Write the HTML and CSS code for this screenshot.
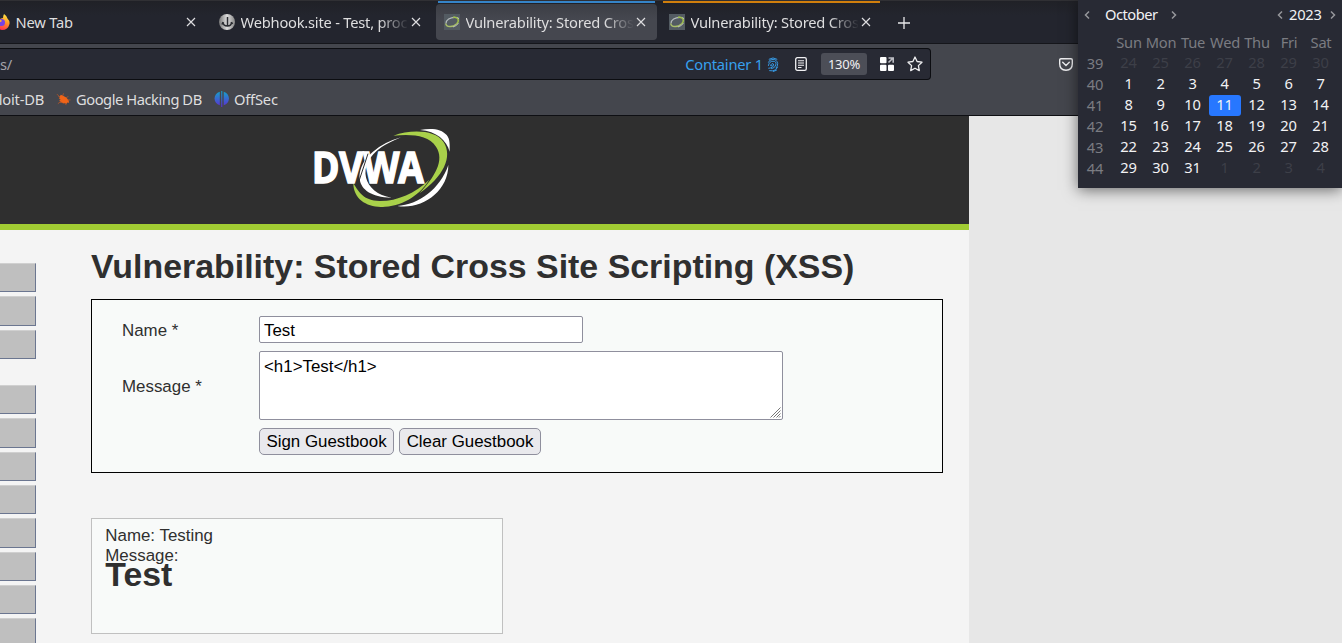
FILE: index.html
```
<!DOCTYPE html>
<html lang="en">
<head>
<meta charset="utf-8">
<title>Vulnerability: Stored Cross Site Scripting (XSS)</title>
<link rel="stylesheet" href="styles.css">
</head>
<body>
<svg class="defs" width="0" height="0">
  <symbol id="close" viewBox="0 0 10 10"><path d="M1 1l8 8M9 1l-8 8" fill="none" stroke="#dedee0" stroke-width="1.15"/></symbol>
  <symbol id="dvwa" viewBox="0 0 16 16"><rect width="16" height="16" fill="#535b62"/><path d="M2 9.500C2 6 6 3.300 11 3.300" fill="none" stroke="#b4babc" stroke-width="1.200"/><path d="M9 3.300C15 2.500 15.500 7 12.500 10" fill="none" stroke="#9fc04c" stroke-width="1.500"/><path d="M1.800 9.500C2 13.500 9 13.500 12.500 10" fill="none" stroke="#a9bf6a" stroke-width="1.500"/><path d="M13.500 3l1.300 2M9 13q4-1 5.500-4" fill="none" stroke="#c5cac9" stroke-width=".8"/></symbol>
  <symbol id="left" viewBox="0 0 6 10"><path d="M5 1.500L1.500 5 5 8.500" fill="none" stroke="#96979c" stroke-width="1.5"/></symbol>
  <symbol id="right" viewBox="0 0 6 10"><path d="M1 1.500L4.500 5 1 8.500" fill="none" stroke="#96979c" stroke-width="1.5"/></symbol>
</svg>

<header class="browser">
  <div class="tabs">
    <div class="tab first">
      <svg class="fav" viewBox="0 0 16 16"><defs><linearGradient id="fx" x1=".8" y1="0" x2=".4" y2="1"><stop offset="0" stop-color="#fff04a"/><stop offset=".45" stop-color="#ff9a25"/><stop offset="1" stop-color="#ff2850"/></linearGradient></defs><path d="M10 0q3 2 3.500 4.500Q16 7 15.500 10 14 16 8 16 0 15 0 8 1 4 4 2l2 3q2-1 3-1 0-2 1-4" fill="url(#fx)"/><circle cx="7.500" cy="8.500" r="3.500" fill="#7542e5"/><path d="M3 5q3 0 5 2-2 2-5 1" fill="#ffae2b"/></svg>
      <span class="title">New Tab</span><svg class="close"><use href="#close"/></svg>
    </div>
    <div class="tab">
      <svg class="fav" viewBox="0 0 16 16"><defs><linearGradient id="wh" x2="1"><stop stop-color="#777"/><stop offset=".5" stop-color="#ddd"/><stop offset="1" stop-color="#888"/></linearGradient></defs><circle cx="8" cy="8" r="8" fill="url(#wh)"/><path d="M8.500 3v8.500M4 8q0 4 4.500 4 4 0 4-4M4 8l-1 2.500M12.500 8l1 2" fill="none" stroke="#292b30" stroke-width="1.500"/></svg>
      <span class="title fade">Webhook.site - Test, process and</span><svg class="close"><use href="#close"/></svg>
    </div>
    <div class="tab active">
      <svg class="fav"><use href="#dvwa"/></svg>
      <span class="title fade">Vulnerability: Stored Cross Site</span><svg class="close"><use href="#close"/></svg>
    </div>
    <div class="tab orange">
      <svg class="fav"><use href="#dvwa"/></svg>
      <span class="title fade">Vulnerability: Stored Cross Site</span><svg class="close"><use href="#close"/></svg>
    </div>
    <svg class="plus" viewBox="0 0 12 12"><path d="M6 0v12M0 6h12" stroke="#e8e8ea" stroke-width="1.300"/></svg>
  </div>
  <div class="toolbar">
    <div class="url">
      <span class="path">s/</span>
      <span class="container">Container 1</span>
      <svg class="finger" viewBox="0 0 12 16"><g fill="none" stroke="#37a0ee" stroke-width="1"><path d="M1.500 2.500Q6-.5 10.500 2.500M1 6q1-3.500 5-3.500T11 7q0 3-2 5M1 9.500Q2 4.500 6 4.500t3 4Q8 12 4 12.500M1 12q2 0 4-1 2.500-2 1.500-3.500Q5 6 3.500 8.500q-.5 2 2 .5M2 14.500q4 1 7-1l2-3M6 15.500l4-1.500"/></g></svg>
      <svg class="reader" viewBox="0 0 12 14"><rect x=".7" y=".7" width="10.600" height="12.600" rx="1.600" fill="none" stroke="#f0f0f2" stroke-width="1.300"/><path d="M3 3.700h6M3 6h6M3 8.200h6M3 10.500h3.500" stroke="#f0f0f2" stroke-width="1.100"/></svg>
      <span class="zoom">130%</span>
      <svg class="grid" viewBox="0 0 14 14"><path d="M1 0h4.500q1 0 1 1v4.500q0 .7-1 .7H1q-1 0-1-1V1q0-1 1-1M1 7.700h4.500q1 0 1 1V13q0 1-1 1H1q-1 0-1-1V8.700q0-1 1-1M9 7.700h4q1 0 1 1V13q0 1-1 1H9q-1 0-1-1V8.700q0-1 1-1" fill="#fff"/><path d="M8.500 1h4.700v4.700M13 1L8.500 5.500" fill="none" stroke="#bcbdc3" stroke-width="1.600"/></svg>
      <svg class="star" viewBox="0 0 16 16"><path d="M8 1l2.100 4.500 4.900.7-3.600 3.400.9 5L8 12.200l-4.300 2.400.9-5L1 6.200l4.900-.7z" fill="none" stroke="#eeeef0" stroke-width="1.300" stroke-linejoin="round"/></svg>
    </div>
    <svg class="pocket" viewBox="0 0 14 13"><path d="M2 .7h10q1.300 0 1.300 1.300v3.700q0 6.300-6.300 6.500Q.7 12 .7 5.700V2Q.7.700 2 .7M3.700 4.300L7 7.500l3.300-3.200" fill="none" stroke="#eeeef0" stroke-width="1.400" stroke-linecap="round"/></svg>
  </div>
  <div class="bookmarks">
    <span class="b-exp">loit-DB</span>
    <svg class="bug" viewBox="0 0 16 14"><path d="M2 4l2 .5L5 2.500l2.500 1 3.500 2 2.500 3 .5 2.500-2-.3-.5 1.300-2.500-.7-1.500.5-1-1-2 .3.500-1.600-2-.5 2-1.200L3 6.500l1.500-.7z" fill="#f06418"/><path d="M1 1.800l3 3M8 1l-1 3M13 4l-2 2M15.500 8H12M2 12l4-3M11 13.500L9 11" stroke="#cf5a20" stroke-width=".7"/></svg>
    <span class="b-ghd">Google Hacking DB</span>
    <svg class="off" viewBox="0 0 16 16"><defs><linearGradient id="of" gradientUnits="userSpaceOnUse" x1="0" y1="0" x2="0" y2="16"><stop stop-color="#14a4cb"/><stop offset="1" stop-color="#5d2bd2"/></linearGradient></defs><path d="M5.800 .8v13.400Q.8 12.500.5 7.500.8 2.500 5.800.8M9.700.8v13.400q5-1.700 5.300-6.700Q14.700 2.500 9.700.8M7.200 0h1.100v16H7.200z" fill="url(#of)"/></svg>
    <span class="b-off">OffSec</span>
  </div>
</header>

<main class="site">
  <div class="banner">
    <svg class="logo" viewBox="0 3 510 324">
      <path d="M303 67Q250 82 218 111C165 155 150 245 275 248 190 235 165 150 245 96Q268 82 303 67" fill="#fff"/>
      <path d="M280 62C335 42 405 45 430 80 460 125 430 185 358 235 405 185 435 135 408 95 385 60 335 57 280 62" fill="#a9d14a"/>
      <path d="M360 45C395 38 425 42 440 60 451 73 449 92 449 110 440 76 410 49 360 45" fill="#fff"/>
      <path d="M445 150C445 230 365 285 292 273 355 269 421 222 445 150" fill="#fff"/>
      <path d="M160 205C160 255 205 280 255 275 315 271 362 236 388 194 345 235 290 259 238 258 192 257 178 234 160 205" fill="#a9d14a"/>
      <text class="logo-text" x="36" y="203" textLength="336" lengthAdjust="spacingAndGlyphs">DVWA</text>
      <path d="M204 116L174 207" stroke="#2f2f2f" stroke-width="3"/>
    </svg>
  </div>
  <div class="content">
    <nav class="menu">
      <ul><li></li><li></li><li></li></ul>
      <ul><li></li><li></li><li></li><li></li><li></li><li></li><li></li><li></li></ul>
    </nav>
    <section class="body">
      <h1 class="heading">Vulnerability: Stored Cross Site Scripting (XSS)</h1>
      <form class="form">
        <label>Name *</label><input class="name" type="text" value="Test">
        <label>Message *</label>
        <div class="area">&lt;h1&gt;Test&lt;/h1&gt;<svg class="grip" viewBox="0 0 11 11"><path d="M.5 10.500l10-10M3.500 10.500l7-7M6.500 10.500l4-4M9 10.500L10.500 9" stroke="#777" stroke-width="1"/></svg></div>
        <div class="buttons"><button type="button" class="sign">Sign Guestbook</button><button type="button" class="clear">Clear Guestbook</button></div>
      </form>
      <div class="comment">Name: Testing<br>Message: <h1 class="injected">Test</h1></div>
    </section>
  </div>
</main>

<aside class="calendar">
  <div class="cal-head">
    <svg class="arrow"><use href="#left"/></svg><span class="month">October</span><svg class="arrow"><use href="#right"/></svg>
    <svg class="arrow prev-year"><use href="#left"/></svg><span class="year">2023</span><svg class="arrow"><use href="#right"/></svg>
  </div>
  <div class="week days"><i></i><span>Sun</span><span>Mon</span><span>Tue</span><span>Wed</span><span>Thu</span><span>Fri</span><span>Sat</span></div>
  <div class="week"><i>39</i><s>24</s><s>25</s><s>26</s><s>27</s><s>28</s><s>29</s><s>30</s></div>
  <div class="week"><i>40</i><b>1</b><b>2</b><b>3</b><b>4</b><b>5</b><b>6</b><b>7</b></div>
  <div class="week"><i>41</i><b>8</b><b>9</b><b>10</b><b class="today">11</b><b>12</b><b>13</b><b>14</b></div>
  <div class="week"><i>42</i><b>15</b><b>16</b><b>17</b><b>18</b><b>19</b><b>20</b><b>21</b></div>
  <div class="week"><i>43</i><b>22</b><b>23</b><b>24</b><b>25</b><b>26</b><b>27</b><b>28</b></div>
  <div class="week"><i>44</i><b>29</b><b>30</b><b>31</b><s>1</s><s>2</s><s>3</s><s>4</s></div>
</aside>
</body>
</html>
```
FILE: styles.css
```
* { box-sizing: border-box; }
body { margin: 0; width: 1342px; height: 643px; overflow: hidden; background: #e7e7e7; font: 16.9px "Liberation Sans", Arial, sans-serif; color: #2f2f2f; }
svg { display: block; flex: none; }
.defs { position: absolute; }

.browser { height: 116px; background: #44464d; border-bottom: 1px solid #0e0f13; color: #dededf; font: 14.7px/20px "Noto Sans", sans-serif; letter-spacing: -.22px; white-space: nowrap; }
.tabs { display: flex; gap: 4px; height: 44px; background: linear-gradient(#202127, #23252e 14px); border-top: 1px solid #303034; border-bottom: 1px solid #15161b; }
.tab { display: flex; align-items: center; width: 221px; height: 36px; margin-top: 3px; padding-left: 8px; border-radius: 4px; position: relative; }
.tab.first { margin-left: -14px; }
.tab.active { background: linear-gradient(#3c3e45, #45474f 15px); }
.tab.active::before, .tab.orange::before { content: ""; position: absolute; left: 2px; right: 2px; top: -3px; height: 2px; background: #3584c8; }
.tab.orange::before { background: #d17f0c; }
.fav { width: 16px; height: 16px; margin-right: 5.5px; }
.title { width: 167px; margin-right: 3.5px; overflow: hidden; }
.fade { -webkit-mask-image: linear-gradient(90deg, #000 138px, transparent 168px); mask-image: linear-gradient(90deg, #000 138px, transparent 168px); }
.close { width: 10px; height: 10px; }
.plus { width: 12px; height: 12px; margin: 16px 0 0 12px; }

.toolbar { display: flex; height: 40px; padding-top: 4px; }
.url { display: flex; align-items: center; width: 931px; height: 32px; background: #282a34; border: 1px solid #0c0d11; border-left: 0; border-radius: 0 4px 4px 0; padding-right: 7px; }
.path { color: #a2a3a9; margin-right: auto; }
.container { color: #37a0ee; }
.finger { width: 12px; height: 15px; margin: 0 16px 0 4px; }
.reader { width: 12px; height: 14px; margin-right: 14px; }
.zoom { width: 46px; height: 22px; margin-right: 13px; border-radius: 3px; background: #4c4e57; color: #f0f0f2; font-size: 13px; line-height: 22px; text-align: center; }
.grid { width: 14px; height: 14px; margin-right: 13px; }
.star { width: 16px; height: 16px; }
.pocket { width: 14px; height: 13px; margin: 10px 0 0 128px; }

.bookmarks { display: flex; align-items: center; height: 31px; padding-bottom: 1px; }
.b-exp { width: 44px; margin-right: 12px; display: flex; justify-content: flex-end; }
.bug { width: 15px; height: 14px; margin-right: 5px; }
.b-ghd { width: 126px; margin-right: 12px; letter-spacing: -.45px; }
.off { width: 16px; height: 16px; margin-right: 4px; }
.b-off { letter-spacing: -.2px; }

.site { width: 969px; height: 527px; background: #f4f4f4; overflow: hidden; }
.banner { height: 114px; background: #2f2f2f; border-bottom: 6px solid #a1cc33; }
.logo { width: 170px; height: 108px; margin-left: 300px; }
.logo-text { font: bold 127px "Noto Sans", sans-serif; fill: #fff; stroke: #fff; stroke-width: 4px; }
.content { display: flex; }
.menu { width: 91px; flex: none; padding-top: 33px; }
.menu ul { list-style: none; margin: 0 0 22px; padding: 0; }
.menu li { width: 36px; height: 29.300px; margin-bottom: 4px; background: #bfbfbf; border: 1px solid #6b7690; border-top-color: #d0d0d0; border-left: 0; }
.menu ul + ul { padding-top: 4.200px; }
.heading { margin: 0; padding-top: 16px; height: 69px; font-size: 33.9px; line-height: 40px; white-space: nowrap; }
.form { display: grid; grid-template-columns: 137px 1fr; grid-template-rows: 27px 69px 27px; row-gap: 8px; align-items: center; width: 852px; height: 174px; padding: 16px 0 0 30px; border: 1px solid #000; background: #f8faf9; align-content: start; }
.form label { padding-top: 2px; }
.name { width: 324px; height: 27px; margin: 0; padding: 2px 4px 0; border: 1px solid #8f8f9d; border-radius: 2px; background: #fff; color: #000; font: inherit; }
.area { position: relative; width: 524px; height: 69px; padding: 5px 4px; border: 1px solid #8f8f9d; border-radius: 2px; background: #fff; color: #000; line-height: 20px; }
.grip { position: absolute; right: 1px; bottom: 1px; width: 11px; height: 11px; }
.buttons { grid-column: 2; display: flex; gap: 5px; }
.buttons button { height: 27px; padding: 0; border: 1px solid #8f8f9d; border-radius: 5px; background: #e9e9ed; color: #000; font: inherit; }
.sign { width: 135px; }
.clear { width: 142px; }
.comment { width: 412px; height: 116px; margin-top: 45px; padding: 7px 13.3px; border: 1px solid #c0c0c0; background: #f8faf9; line-height: 20px; }
.injected { margin: 0; font-size: 33.8px; line-height: 17px; }

.calendar { position: absolute; left: 1078px; top: 0; width: 264px; height: 188px; background: #282a34; box-shadow: 0 2px 14px rgba(0,0,0,.55); color: #f2f2f4; font: 14.7px/21px "Noto Sans", sans-serif; letter-spacing: -.25px; }
.cal-head { display: flex; align-items: center; height: 32px; padding: 0 6px 3px 6px; }
.arrow { width: 6px; height: 10px; }
.month { width: 53px; margin: 0 13px 0 15px; letter-spacing: -.5px; }
.prev-year { margin-left: auto; }
.year { width: 34px; margin: 0 7px 0 6px; }
.week { display: grid; grid-template-columns: 35px repeat(7, 32px); height: 21px; text-align: center; }
.week i, .week s, .week b { font-style: normal; font-weight: 400; text-decoration: none; }
.week s, .week b { line-height: 19px; padding-right: 1px; }
.week i { color: #7b7c82; padding-right: 1px; }
.week s { color: #3d3f48; }
.days { color: #7b7c82; }
.today { background: #2777ff; border-radius: 3px; }
```
